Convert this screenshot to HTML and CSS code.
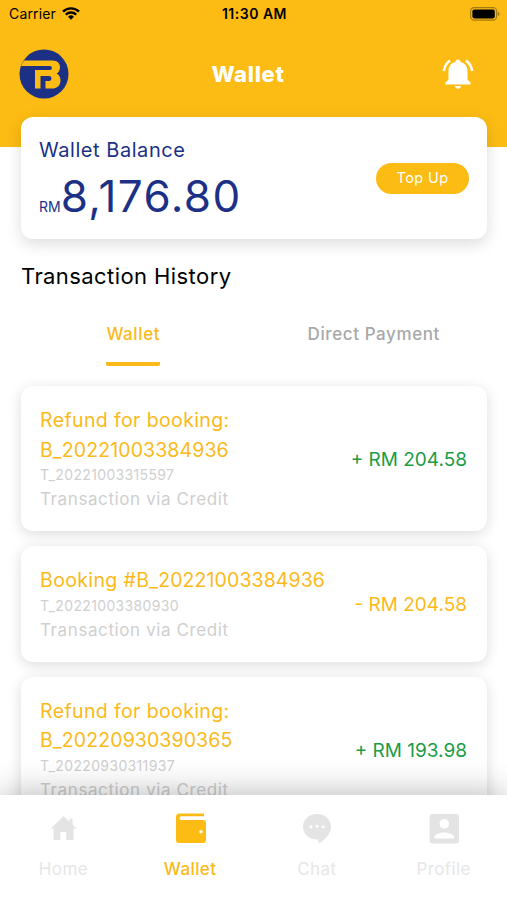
FILE: index.html
```html
<!DOCTYPE html>
<html lang="en">
<head>
    <meta charset="UTF-8">
    <meta name="viewport" content="width=device-width, initial-scale=1.0">
    <title>Wallet</title>
    <link rel="stylesheet" href="styles.css">
</head>
<body>

<div class="app">
    <div class="header">
        <div class="status-bar">
            <div class="carrier">
                <span>Carrier</span>
                <svg width="18" height="14" viewBox="0 0 18 14" fill="none" stroke="#000" stroke-width="2.4">
                    <path d="M1 4.700a11.4 11.4 0 0 1 16 0"/>
                    <path d="M3.8 7.700a7.4 7.4 0 0 1 10.4 0"/>
                    <path d="M9 12.700L6 9.800a4.3 4.3 0 0 1 6 0z" fill="#000" stroke="none"/>
                </svg>
            </div>
            <span class="time">11:30 AM</span>
            <div class="battery">
                <svg width="30" height="14" viewBox="0 0 30 14">
                    <rect x="0.6" y="0.6" width="26" height="12.6" rx="3.6" fill="none" stroke="#a47b12" stroke-width="1.2"/>
                    <rect x="2.4" y="2.4" width="22.4" height="9" rx="1.8" fill="#000"/>
                    <path d="M27.8 4.8q1.8.6 1.8 2.1t-1.8 2.1z" fill="#a47b12"/>
                </svg>
            </div>
        </div>
        <div class="title-bar">
            <svg width="50" height="50" viewBox="0 0 50 50">
                <circle cx="25" cy="25" r="24.5" fill="#1c3186"/>
                <path d="M5 11.5H33.5C38.5 11.5 41 14.5 41 18C41 21 39.7 23.3 37.7 24.5C40.3 26 41.5 28.5 41.5 31.2C41.5 36.5 38 39.5 33 39.5H26.5V32H30C33.300 32 33.300 27 30 27H21.5V39.5H16V21H31C33.5 21 33.5 17 31 17H1.8z" fill="#fdbc14"/>
            </svg>
            <h1>Wallet</h1>
            <svg class="bell" width="32" height="32" viewBox="0 0 32 32">
                <path d="M16 0.500c-1.600 0-2.500 1-2.500 2.500C9 4 6.500 7.500 6.500 12v8.500L3.500 23.500v2h25v-2L25.500 20.500V12c0-4.500-2.500-8-7-9 0-1.500-.9-2.500-2.500-2.500zM13 27c.3 1.700 1.500 2.800 3 2.800s2.700-1.100 3-2.800z" fill="#fff"/>
                <path d="M8 1.5Q2.7 5.5 1.8 12M24 1.5Q29.300 5.5 30.200 12" fill="none" stroke="#fff" stroke-width="2.5"/>
            </svg>
        </div>
    </div>

    <div class="balance-card">
        <div>
            <p class="balance-label">Wallet Balance</p>
            <p class="balance"><span class="currency">RM</span><span class="amount">8,176.80</span></p>
        </div>
        <button class="top-up">Top Up</button>
    </div>

    <h2>Transaction History</h2>

    <div class="tabs">
        <div class="tab active"><span>Wallet</span></div>
        <div class="tab"><span>Direct Payment</span></div>
    </div>

    <div class="transactions">
        <div class="transaction">
            <div class="details">
                <h3>Refund for booking:<br><span class="code">B_20221003384936</span></h3>
                <p class="ref">T_20221003315597</p>
                <p class="method">Transaction via Credit</p>
            </div>
            <span class="value credit">+ RM 204.58</span>
        </div>
        <div class="transaction">
            <div class="details">
                <h3>Booking #<span class="code">B_20221003384936</span></h3>
                <p class="ref">T_20221003380930</p>
                <p class="method">Transaction via Credit</p>
            </div>
            <span class="value debit">- RM 204.58</span>
        </div>
        <div class="transaction">
            <div class="details">
                <h3>Refund for booking:<br><span class="code">B_20220930390365</span></h3>
                <p class="ref">T_20220930311937</p>
                <p class="method">Transaction via Credit</p>
            </div>
            <span class="value credit">+ RM 193.98</span>
        </div>
    </div>

    <div class="nav">
        <div class="nav-item">
            <svg width="32" height="32" viewBox="0 0 32 32" fill="#e4e4e4">
                <path d="M16.5 4L4 16.5h2.5V28h6.800v-8h6v8H26.500V16.5H29.5L25.5 12.5V6.5h-3v3.2z"/>
            </svg>
            <span>Home</span>
        </div>
        <div class="nav-item active">
            <svg width="32" height="32" viewBox="0 0 32 32" fill="#fdbc14">
                <path d="M5.5 1.5H30V4.3H7.5a1.9 1.9 0 0 0 0 3.8H29a3 3 0 0 1 3 3V28a3 3 0 0 1-3 3H5a3 3 0 0 1-3-3V5A3.5 3.5 0 0 1 5.5 1.5z"/>
                <circle cx="27" cy="19.8" r="1.7" fill="#fff"/>
            </svg>
            <span>Wallet</span>
        </div>
        <div class="nav-item">
            <svg width="32" height="32" viewBox="0 0 32 32" fill="#e4e4e4">
                <path d="M16 2C8 2 2 7.500 2 14.700S8 27.500 16 27.500h1.5v4C24 28 30 22 30 14.700 30 7.500 24 2 16 2z"/>
                <g fill="#fff">
                    <circle cx="10" cy="14.8" r="1.5"/>
                    <circle cx="16" cy="14.3" r="1.5"/>
                    <circle cx="22" cy="14.8" r="1.5"/>
                </g>
            </svg>
            <span>Chat</span>
        </div>
        <div class="nav-item">
            <svg width="32" height="32" viewBox="0 0 32 32" fill="#e4e4e4">
                <rect x="1.5" y="2" width="29.5" height="29.5" rx="3"/>
                <circle cx="16.3" cy="11.8" r="4.8" fill="#fff"/>
                <path d="M6.3 26.500v-1c0-3.300 6.600-5 10-5s10 1.700 10 5v1z" fill="#fff"/>
            </svg>
            <span>Profile</span>
        </div>
    </div>
</div>

</body>
</html>
```

FILE: styles.css
```css
* {
    box-sizing: border-box;
}
body {
    font-family: Inter, sans-serif;
    margin: 0;
    background-color: #fff;
}
h1, h2, h3, p {
    margin: 0;
    font-weight: normal;
}
svg {
    display: block;
    flex-shrink: 0;
}
.app {
    display: flex;
    flex-direction: column;
    height: 900px;
    overflow: hidden;
}
.header {
    background-color: #fdbc14;
    height: 147px;
    flex-shrink: 0;
}
.status-bar {
    display: grid;
    grid-template-columns: 1fr auto 1fr;
    align-items: center;
    height: 27px;
    padding: 0 7px 0 9px;
    font-size: 14px;
}
.carrier {
    display: flex;
    align-items: center;
    gap: 6px;
    letter-spacing: 0.15px;
}
.time {
    font-weight: 600;
    letter-spacing: 0.5px;
}
.battery {
    display: flex;
    justify-content: flex-end;
}
.title-bar {
    display: flex;
    justify-content: space-between;
    align-items: center;
    height: 94px;
    padding: 0 33px 0 19px;
}
.bell {
    margin-top: 2px;
}
h1 {
    margin-right: 15px;
    color: #fff;
    font-size: 22px;
    font-weight: 800;
    letter-spacing: 0.7px;
}
.balance-card {
    display: flex;
    justify-content: space-between;
    align-items: center;
    height: 122px;
    margin: -30px 20px 0 21px;
    padding: 0 18px;
    flex-shrink: 0;
    background-color: #fff;
    border-radius: 12px;
    box-shadow: 0 5px 16px rgba(0, 0, 0, 0.14);
    color: #1c3186;
}
.balance-label {
    padding-top: 16px;
    font-size: 20px;
    line-height: 30px;
    letter-spacing: 0.55px;
}
.balance {
    line-height: 62px;
}
.currency {
    font-size: 14px;
}
.amount {
    font-size: 44px;
    letter-spacing: 1.4px;
}
.top-up {
    width: 93px;
    height: 31px;
    padding: 0 0 1px;
    border: none;
    border-radius: 16px;
    background-color: #fdbc14;
    color: #fff;
    font-family: inherit;
    font-size: 14.5px;
    letter-spacing: 0.4px;
}
h2 {
    margin: 21px 21px 0;
    font-size: 22px;
    line-height: 32px;
    letter-spacing: 0.42px;
}
.tabs {
    display: flex;
    height: 56px;
    margin-top: 19px;
    padding: 0 7px;
    flex-shrink: 0;
    font-size: 17px;
    font-weight: 500;
    letter-spacing: 0.6px;
    color: #a8a8a8;
}
.tab {
    display: flex;
    flex: 1;
    justify-content: center;
}
.tab:last-child {
    padding-right: 6px;
}
.tab span {
    height: 55px;
    line-height: 46px;
}
.tab.active {
    padding-left: 6px;
    color: #fbb91a;
}
.tab.active span {
    border-bottom: 4px solid #fbb91a;
    border-radius: 2px;
}
.transactions {
    display: flex;
    flex: 1;
    flex-direction: column;
    gap: 15px;
    min-height: 0;
    padding: 19px 20px 0 21px;
}
.transaction {
    display: flex;
    justify-content: space-between;
    align-items: center;
    padding: 20px 20px 20px 19px;
    background-color: #fff;
    border-radius: 12px;
    box-shadow: 0 3px 14px rgba(0, 0, 0, 0.14);
    flex-shrink: 0;
}
.transaction h3 {
    color: #fbb91a;
    font-size: 19.5px;
    line-height: 29.5px;
    letter-spacing: 0.38px;
}
.transaction .code {
    letter-spacing: 0.1px;
}
.ref {
    color: #cfcfcf;
    font-size: 14px;
    line-height: 19px;
    letter-spacing: 0.35px;
}
.method {
    padding-top: 3px;
    color: #cfcfcf;
    font-size: 17px;
    line-height: 24px;
    letter-spacing: 0.6px;
}
.value {
    padding-top: 2px;
    font-size: 19px;
}
.credit {
    color: #1b9c45;
}
.debit {
    color: #fbb91a;
}
.nav {
    display: grid;
    grid-template-columns: repeat(4, 1fr);
    height: 105px;
    padding-top: 17px;
    flex-shrink: 0;
    position: relative;
    background-color: #fff;
    box-shadow: 0 0 32px rgba(0, 0, 0, 0.3);
}
.nav-item {
    display: flex;
    flex-direction: column;
    align-items: center;
    gap: 12px;
    color: #e6e6e6;
    font-size: 17px;
    line-height: 26px;
    letter-spacing: 0.4px;
}
.nav-item.active {
    color: #fbb91a;
    font-weight: 500;
}
```
